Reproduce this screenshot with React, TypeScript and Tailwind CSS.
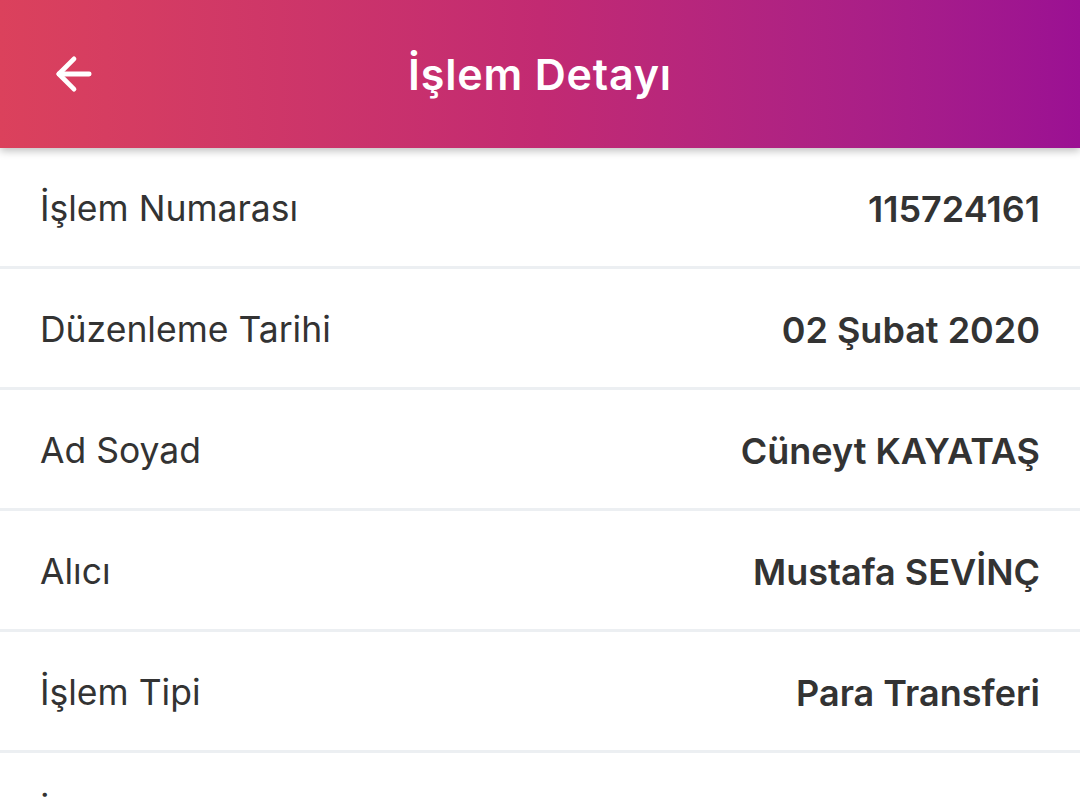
import { ArrowLeft } from "lucide-react";

const rows = [
  { label: "İşlem Numarası", value: "115724161" },
  { label: "Düzenleme Tarihi", value: "02 Şubat 2020" },
  { label: "Ad Soyad", value: "Cüneyt KAYATAŞ" },
  { label: "Alıcı", value: "Mustafa SEVİNÇ" },
  { label: "İşlem Tipi", value: "Para Transferi" },
  { label: "İşlem Tutarı", value: "250,00 TL" },
];

export default function App() {
  return (
    <div
      className="h-[799px] w-[1080px] overflow-hidden bg-white"
      style={{ fontFamily: 'Inter, "Noto Sans", sans-serif' }}
    >
      <header className="relative z-10 flex h-[148px] items-center bg-gradient-to-r from-[#db415c] via-[#c22a72] to-[#9b1093] shadow-[0_3px_8px_rgba(0,0,0,0.25)]">
        <button className="ml-[48px] flex h-[52px] w-[52px] items-center justify-center text-white">
          <ArrowLeft size={52} strokeWidth={2.2} />
        </button>
        <h1 className="absolute left-1/2 -translate-x-1/2 text-[43px] font-semibold tracking-[0.8px] text-white">
          İşlem Detayı
        </h1>
      </header>

      <div>
        {rows.map((r) => (
          <div
            key={r.label}
            className="flex h-[121px] items-center justify-between border-b-[3px] border-[#eceff2] px-[40px] pt-[4px] text-[#333333]"
          >
            <span className="text-[35.5px]">{r.label}</span>
            <span className="text-[36px] font-semibold">{r.value}</span>
          </div>
        ))}
      </div>
    </div>
  );
}
